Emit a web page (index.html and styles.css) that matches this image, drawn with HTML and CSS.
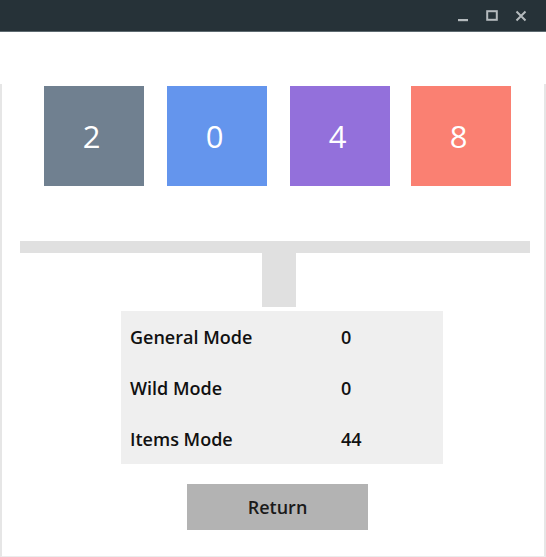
FILE: index.html
```html
<!DOCTYPE html>
<html>
<head>
<meta charset="utf-8">
<link rel="stylesheet" href="styles.css">
</head>
<body>
<div class="titlebar">
  <div class="controls">
    <svg class="ctl" width="12" height="12" viewBox="0 0 12 12"><rect x="1" y="9" width="10" height="2.2" fill="#b4babd"/></svg>
    <svg class="ctl" width="12" height="12" viewBox="0 0 12 12"><rect x="1.2" y="1.2" width="9.6" height="8.6" fill="none" stroke="#b4babd" stroke-width="2"/></svg>
    <svg class="ctl" width="12" height="12" viewBox="0 0 12 12"><path d="M1.5 1.5 L10.5 10.5 M10.5 1.5 L1.5 10.5" stroke="#b4babd" stroke-width="2"/></svg>
  </div>
</div>
<div class="content">
  <div class="panel">
    <div class="tiles">
      <div class="tile t2">2</div>
      <div class="tile t0">0</div>
      <div class="tile t4">4</div>
      <div class="tile t8">8</div>
    </div>
    <div class="bar"></div>
    <div class="stem"></div>
    <div class="stats">
      <div class="row"><span class="label">General Mode</span><span class="value">0</span></div>
      <div class="row"><span class="label">Wild Mode</span><span class="value">0</span></div>
      <div class="row"><span class="label">Items Mode</span><span class="value">44</span></div>
    </div>
    <div class="btnwrap"><button class="btn">Return</button></div>
  </div>
</div>
</body>
</html>
```
FILE: styles.css
```css
html, body {
  margin: 0;
  padding: 0;
  background: #ffffff;
  font-family: "Comic Sans MS", "Open Sans", sans-serif;
}
.titlebar {
  height: 31px;
  background: #263238;
  border-bottom: 1px solid #5d6a70;
  display: flex;
  justify-content: flex-end;
  align-items: center;
}
.controls {
  display: flex;
  gap: 17px;
  padding-right: 19px;
  padding-top: 1px;
}
.ctl { display: block; }
.content {
  padding-top: 52px;
}
.panel {
  height: 472px;
  border-left: 2px solid #e6e6e6;
  border-right: 2px solid #e6e6e6;
  border-bottom: 1px solid #ececec;
  display: flex;
  flex-direction: column;
}
.tiles {
  display: flex;
  gap: 23px;
  padding-left: 42px;
  padding-top: 2px;
}
.tile {
  width: 100px;
  height: 100px;
  display: flex;
  align-items: center;
  justify-content: center;
  color: #ffffff;
  font-size: 31px;
  padding-right: 5px;
  box-sizing: border-box;
}
.t2 { background: #708090; }
.t0 { background: #6495ed; }
.t4 { background: #9370db; }
.t8 { background: #fa8072; margin-left: -2px; }
.bar {
  margin: 55px 0 0 18px;
  width: 510px;
  height: 12px;
  background: #e0e0e0;
}
.stem {
  margin-left: 260px;
  width: 34px;
  height: 54px;
  background: #e0e0e0;
}
.stats {
  margin: 4px 0 0 119px;
  width: 322px;
  background: #efefef;
  display: flex;
  flex-direction: column;
}
.row {
  height: 51px;
  display: flex;
  align-items: center;
  font-size: 18px;
  font-weight: 600;
  color: #111111;
}
.label {
  width: 211px;
  padding-left: 9px;
}
.btnwrap {
  margin: 20px 0 0 185px;
}
.btn {
  width: 181px;
  height: 46px;
  border: none;
  background: #b3b3b3;
  font-family: inherit;
  font-size: 18px;
  font-weight: 600;
  color: #1a1a1a;
  padding: 0;
}
```
